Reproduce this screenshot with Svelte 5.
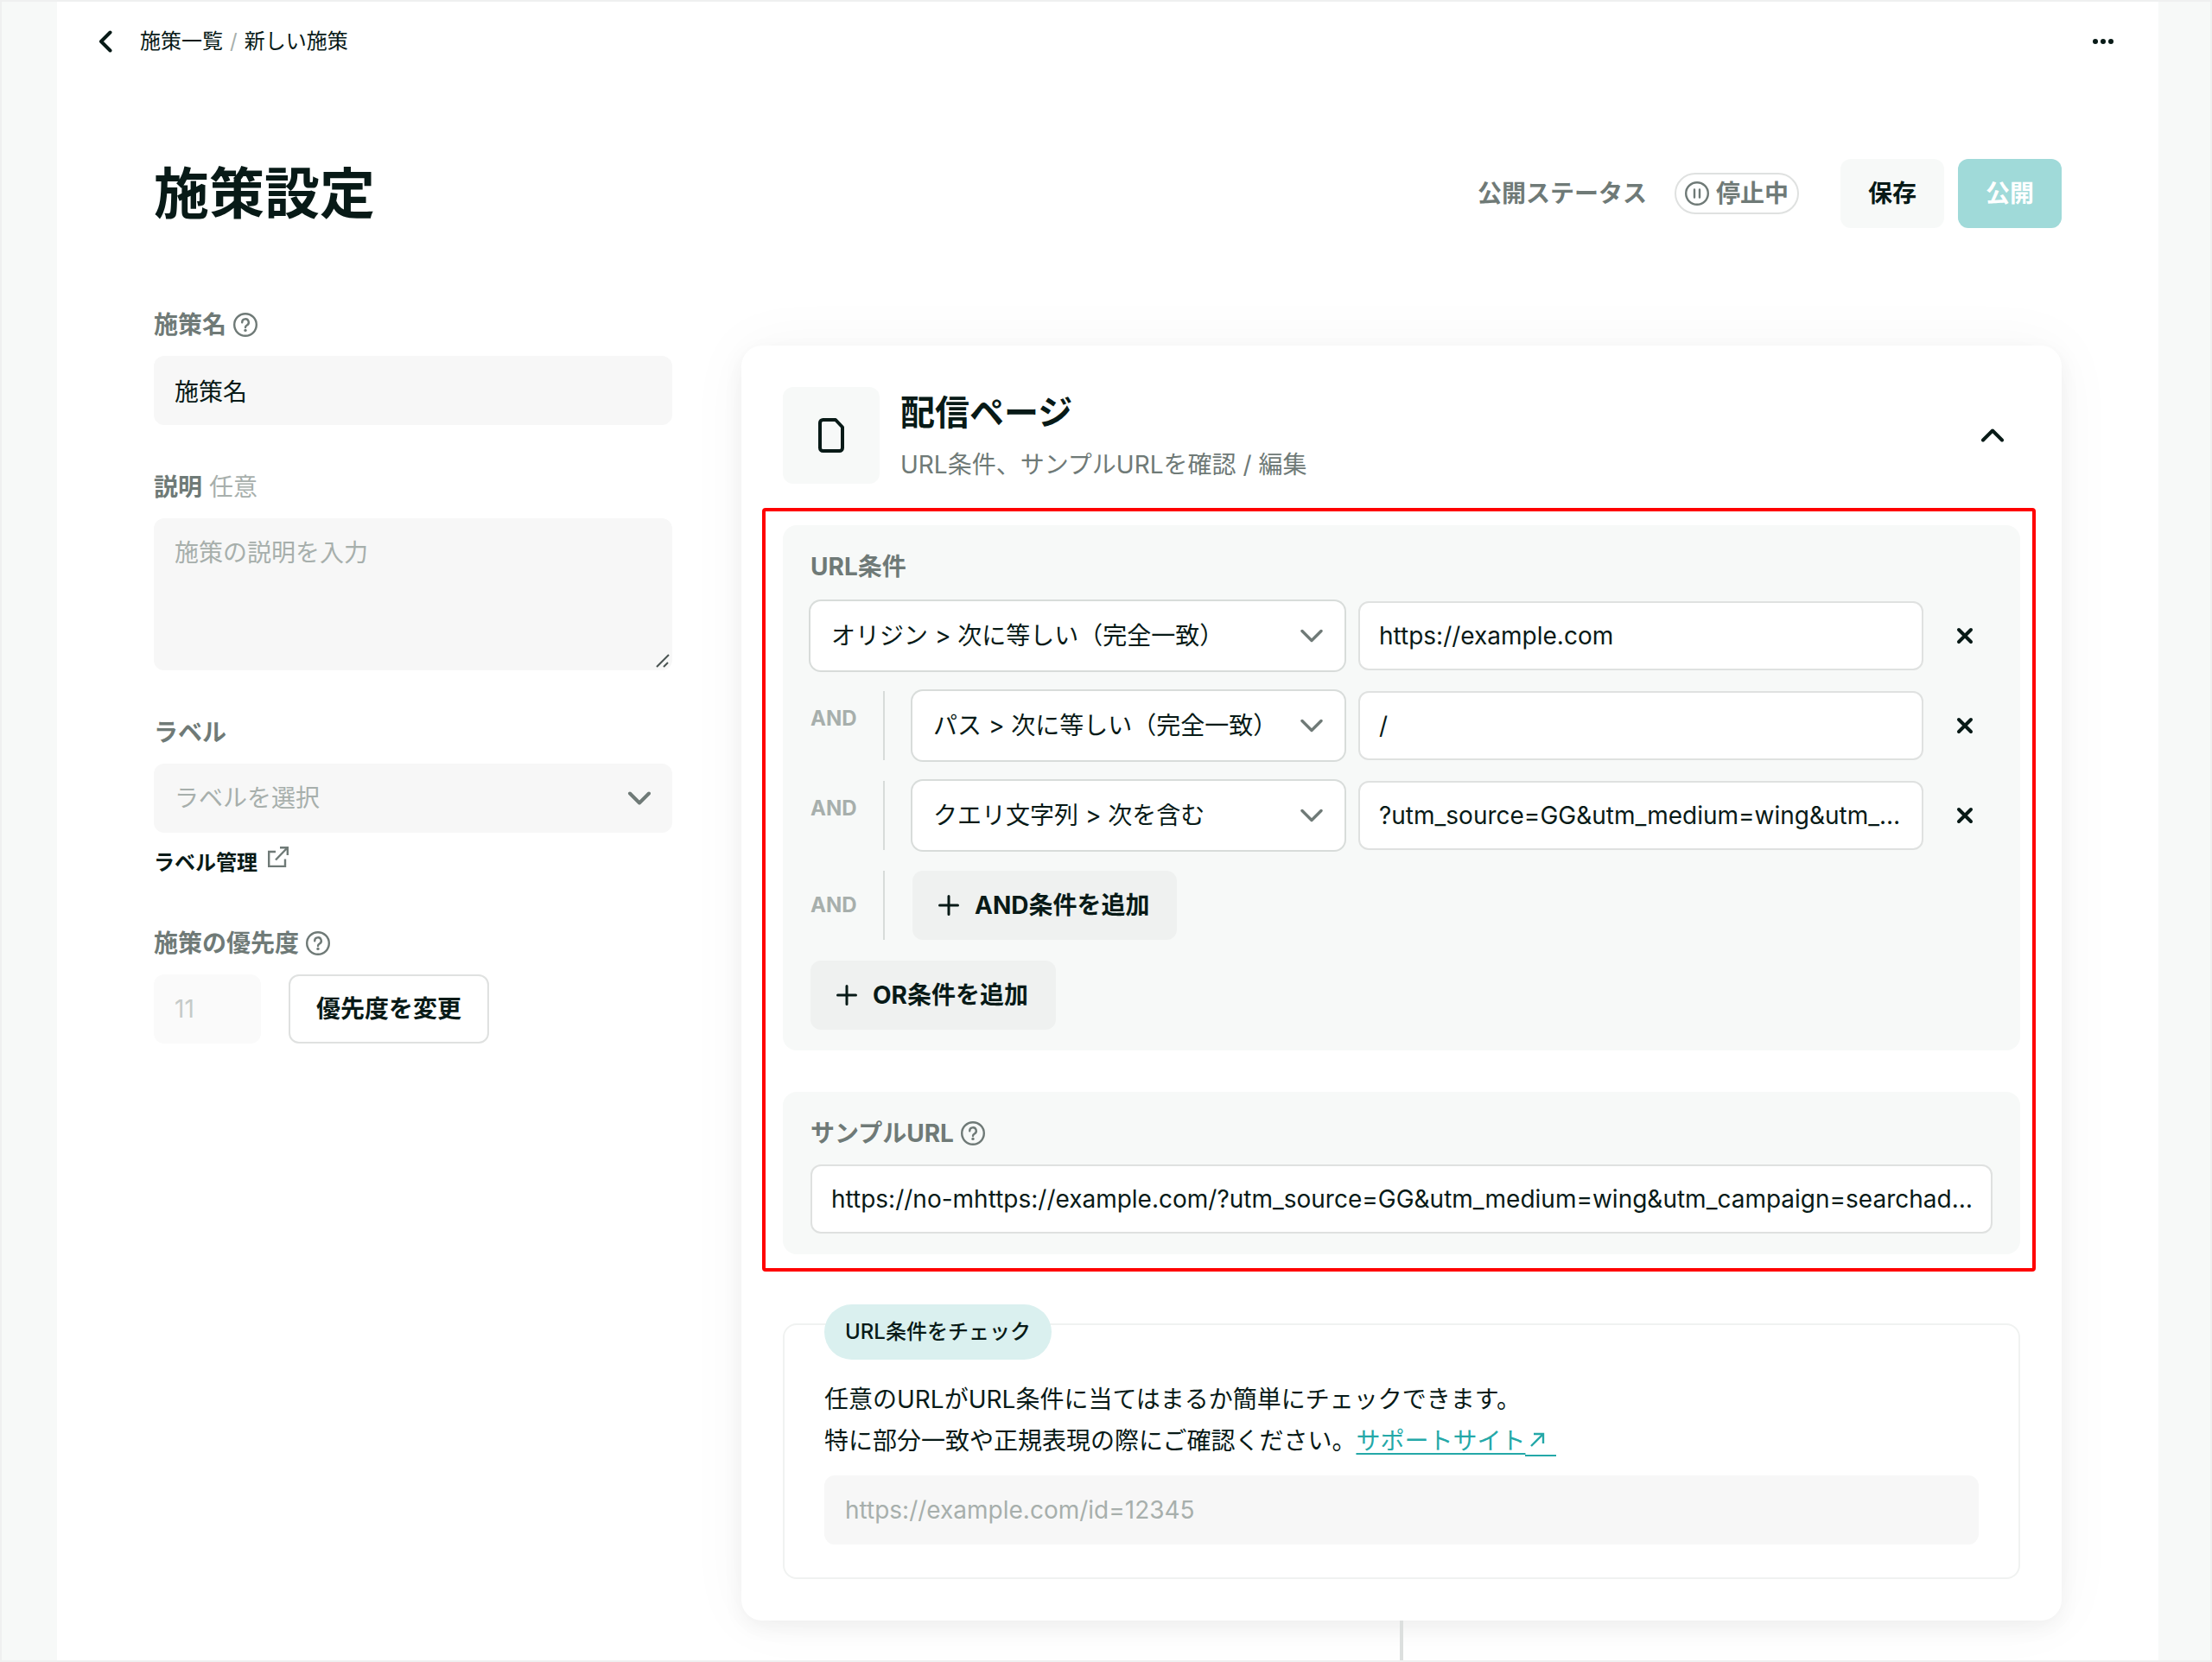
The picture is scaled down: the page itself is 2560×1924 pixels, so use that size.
<script>
    let name = '施策名';
    let description = '';
    let priority = '11';
    let sampleUrl = 'https://no-mhttps://example.com/?utm_source=GG&utm_medium=wing&utm_campaign=searchad…';
    let checkUrl = '';

    let conditions = [
        { type: 'オリジン > 次に等しい（完全一致）', value: 'https://example.com' },
        { type: 'パス > 次に等しい（完全一致）', value: '/' },
        { type: 'クエリ文字列 > 次を含む', value: '?utm_source=GG&utm_medium=wing&utm_…' },
    ];

    function removeCondition(index) {
        conditions = conditions.filter((_, i) => i !== index);
    }
</script>

{#snippet help()}
    <svg class="help" viewBox="0 0 28 28" aria-hidden="true">
        <circle cx="14" cy="14" r="12.8" />
        <path d="M10.2 11.2a3.8 3.8 0 1 1 5.6 3.3c-1.2.7-1.8 1.2-1.8 2.5" />
        <circle class="dot" cx="14" cy="20.4" r="1.7" />
    </svg>
{/snippet}

{#snippet chevron()}
    <svg class="chevron" viewBox="0 0 28 16" aria-hidden="true"><path d="M3 2.5l11 11 11-11" /></svg>
{/snippet}

{#snippet plus()}
    <svg class="plus" viewBox="0 0 24 24" aria-hidden="true"><path d="M12 1.5v21M1.5 12h21" /></svg>
{/snippet}

<div class="page">
    <main>
        <nav class="topbar">
            <button class="back" aria-label="戻る">
                <svg viewBox="0 0 16 26" aria-hidden="true"><path d="M13.5 2.5L3 13l10.5 10.5" /></svg>
            </button>
            <div class="breadcrumb">
                <a href="#list">施策一覧</a>
                <span class="slash">/</span>
                <span>新しい施策</span>
            </div>
            <button class="more" aria-label="メニュー">
                <svg viewBox="0 0 24 6" aria-hidden="true">
                    <circle cx="3" cy="3" r="3" /><circle cx="12" cy="3" r="3" /><circle cx="21" cy="3" r="3" />
                </svg>
            </button>
        </nav>

        <header>
            <h1>施策設定</h1>
            <span class="statusLabel">公開ステータス</span>
            <span class="status">
                <svg viewBox="0 0 28 28" aria-hidden="true">
                    <circle cx="14" cy="14" r="12.8" />
                    <path d="M11 9.5v9M17 9.5v9" />
                </svg>
                停止中
            </span>
            <div class="actions">
                <button class="save">保存</button>
                <button class="publish">公開</button>
            </div>
        </header>

        <div class="columns">
            <aside>
                <div class="field">
                    <div class="label"><label for="name">施策名</label>{@render help()}</div>
                    <input id="name" type="text" bind:value={name} />
                </div>

                <div class="field">
                    <div class="label"><label for="description">説明</label><span class="optional">任意</span></div>
                    <div class="textareaWrap">
                        <textarea id="description" placeholder="施策の説明を入力" bind:value={description}></textarea>
                        <svg class="grip" viewBox="0 0 16 16" aria-hidden="true"><path d="M1 15L15 1M9 15l5-5" /></svg>
                    </div>
                </div>

                <div class="field">
                    <div class="label"><label for="tag">ラベル</label></div>
                    <div class="select gray">
                        <select id="tag"><option>ラベルを選択</option></select>
                        {@render chevron()}
                    </div>
                    <a class="manage" href="#labels">
                        ラベル管理
                        <svg viewBox="0 0 24 24" aria-hidden="true">
                            <path d="M9 6H1.2v17H20v-8.5M9 15.5L22.5 1.5M14 1.2h8.8V10" />
                        </svg>
                    </a>
                </div>

                <div class="field">
                    <div class="label"><label for="priority">施策の優先度</label>{@render help()}</div>
                    <div class="priority">
                        <input id="priority" type="text" value={priority} disabled />
                        <button class="outlined">優先度を変更</button>
                    </div>
                </div>
            </aside>

            <div class="flow">
                <section class="card">
                    <div class="cardHead">
                        <div class="cardIcon">
                            <svg viewBox="0 0 30 40" aria-hidden="true">
                                <path d="M5.5 2H20l8 8.5v24a3.5 3.5 0 0 1-3.5 3.5h-19A3.5 3.5 0 0 1 2 34.5v-29A3.5 3.5 0 0 1 5.5 2z" />
                            </svg>
                        </div>
                        <div class="cardTitle">
                            <h2>配信ページ</h2>
                            <p>URL条件、サンプルURLを確認 / 編集</p>
                        </div>
                        <button class="collapse" aria-label="閉じる">
                            <svg viewBox="0 0 28 16" aria-hidden="true"><path d="M3 13.5l11-11 11 11" /></svg>
                        </button>
                    </div>

                    <div class="highlight">
                        <div class="panel">
                            <div class="label">URL条件</div>
                            <div class="conditions">
                                {#each conditions as condition, i}
                                    <div class="condition">
                                        <div class="conditionType">
                                            {#if i > 0}<span class="and">AND</span>{/if}
                                            <div class="select">
                                                <select aria-label="条件の種類"><option>{condition.type}</option></select>
                                                {@render chevron()}
                                            </div>
                                        </div>
                                        <input class="white" type="text" aria-label="条件の値" bind:value={condition.value} />
                                        <button class="remove" aria-label="削除" on:click={() => removeCondition(i)}>
                                            <svg viewBox="0 0 20 20" aria-hidden="true"><path d="M3 3l14 14M17 3L3 17" /></svg>
                                        </button>
                                    </div>
                                {/each}
                                <div class="conditionType">
                                    <span class="and last">AND</span>
                                    <button class="add">{@render plus()}AND条件を追加</button>
                                </div>
                                <button class="add">{@render plus()}OR条件を追加</button>
                            </div>
                        </div>

                        <div class="panel">
                            <div class="label"><label for="sample">サンプルURL</label>{@render help()}</div>
                            <input id="sample" class="white" type="text" bind:value={sampleUrl} />
                        </div>
                    </div>

                    <div class="check">
                        <label class="badge" for="check">URL条件をチェック</label>
                        <p>
                            任意のURLがURL条件に当てはまるか簡単にチェックできます。<br />
                            特に部分一致や正規表現の際にご確認ください。<a href="#support">サポートサイト<svg viewBox="0 0 36 28" aria-hidden="true"><path d="M7 18L21 4M10 4h11v11" /></svg></a>
                        </p>
                        <input id="check" type="text" placeholder="https://example.com/id=12345" bind:value={checkUrl} />
                    </div>
                </section>
                <div class="connector"></div>
            </div>
        </div>
    </main>
</div>

<style>
    :global(body) {
        margin: 0;
    }

    .page {
        box-sizing: border-box;
        min-height: 100vh;
        display: flex;
        padding: 0 60px 0 64px;
        border: 2px solid #eff0f0;
        background-color: #f7f9f8;
        color: #081a17;
        font-family: Inter, 'Noto Sans CJK JP', sans-serif;
        font-size: 28px;
        line-height: 40px;
    }

    main {
        flex: 1;
        min-width: 0;
        display: flex;
        flex-direction: column;
        background-color: white;
    }

    button, input, select, textarea {
        box-sizing: border-box;
        margin: 0;
        border: none;
        font: inherit;
        color: inherit;
    }

    button {
        padding: 0;
        background: none;
        cursor: pointer;
    }

    svg {
        fill: none;
        stroke: currentColor;
        flex-shrink: 0;
    }

    h1, h2, p {
        margin: 0;
    }

    a {
        color: inherit;
        text-decoration: none;
    }

    /* top bar */
    .topbar {
        display: flex;
        align-items: center;
        height: 92px;
        padding: 0 52px 0 48px;
        font-size: 24px;
    }

    .back, .more, .collapse, .remove {
        display: flex;
        align-items: center;
        justify-content: center;
    }

    .back {
        width: 16px;
        margin-right: 32px;
    }

    .back svg {
        width: 16px;
        height: 26px;
        stroke-width: 4;
        stroke-linecap: round;
        stroke-linejoin: round;
    }

    .breadcrumb {
        display: flex;
        gap: 8px;
        flex: 1;
    }

    .slash {
        color: #a7afac;
    }

    .more svg {
        width: 24px;
        height: 6px;
        fill: currentColor;
        stroke: none;
    }

    /* heading */
    header {
        display: flex;
        align-items: center;
        padding: 90px 112px 0;
        color: #6f7a77;
        font-weight: 700;
    }

    h1 {
        flex: 1;
        color: #081a17;
        font-size: 64px;
        line-height: 80px;
    }

    .status {
        box-sizing: border-box;
        display: flex;
        align-items: center;
        gap: 8px;
        height: 48px;
        margin: 0 48px 0 32px;
        padding: 0 10px;
        border: 2px solid #dfe1e0;
        border-radius: 24px;
    }

    .status svg {
        width: 28px;
        height: 28px;
        stroke-width: 2.4;
        stroke-linecap: round;
    }

    .actions {
        display: flex;
        gap: 16px;
    }

    .actions button {
        width: 120px;
        height: 80px;
        border-radius: 12px;
    }

    .save {
        background-color: #f7f9f8;
        color: #081a17;
    }

    .publish {
        background-color: #a0dad9;
        color: white;
    }

    .columns {
        flex: 1;
        display: flex;
        gap: 80px;
        padding: 92px 112px 0;
    }

    /* form fields */
    aside {
        width: 600px;
        display: flex;
        flex-direction: column;
        gap: 52px;
    }

    .label {
        display: flex;
        align-items: center;
        gap: 8px;
        margin-bottom: 16px;
        color: #6f7a77;
        font-weight: 700;
    }

    .optional {
        color: #a7afac;
        font-weight: 400;
    }

    .help {
        width: 28px;
        height: 28px;
        stroke-width: 2.4;
        stroke-linecap: round;
    }

    .help .dot {
        fill: currentColor;
        stroke: none;
    }

    input {
        display: block;
        width: 100%;
        height: 80px;
        padding: 0 24px;
        border-radius: 12px;
        background-color: #f7f7f7;
        text-overflow: ellipsis;
    }

    input.white {
        padding: 0 14px 0 22px;
        border: 2px solid #dfe1e0;
        background-color: white;
    }

    .textareaWrap {
        position: relative;
    }

    textarea {
        display: block;
        width: 100%;
        height: 176px;
        padding: 20px 24px;
        border-radius: 12px;
        background-color: #f7f7f7;
        resize: none;
    }

    input::placeholder, textarea::placeholder {
        color: #a7afac;
        opacity: 1;
    }

    .grip {
        position: absolute;
        right: 3px;
        bottom: 3px;
        width: 16px;
        height: 16px;
        stroke: #4a5452;
        stroke-width: 2;
    }

    .select {
        flex: 1;
        min-width: 0;
        display: grid;
        align-items: center;
        height: 80px;
        border-radius: 12px;
        background-color: white;
        box-shadow: 0 0 0 2px #d8dcda;
    }

    .select.gray {
        background-color: #f7f7f7;
        box-shadow: none;
        color: #a7afac;
    }

    .select select, .select .chevron {
        grid-area: 1 / 1;
    }

    select {
        appearance: none;
        width: 100%;
        height: 80px;
        padding: 0 64px 0 24px;
        background: none;
    }

    .chevron {
        justify-self: end;
        width: 28px;
        height: 16px;
        margin-right: 24px;
        stroke: #6f7a77;
        stroke-width: 3.4;
        stroke-linecap: round;
        stroke-linejoin: round;
        pointer-events: none;
    }

    .gray .chevron {
        stroke-width: 4;
    }

    .manage {
        display: flex;
        align-items: flex-start;
        gap: 12px;
        height: 40px;
        margin-top: 16px;
        font-size: 24px;
        line-height: 38px;
        font-weight: 700;
    }

    .manage svg {
        width: 24px;
        height: 24px;
        stroke: #6f7a77;
        stroke-width: 2.4;
    }

    .priority {
        display: flex;
        gap: 32px;
    }

    .priority input {
        width: 124px;
        background-color: #fafafa;
        color: #c5cac8;
    }

    .outlined {
        height: 80px;
        padding: 0 30px;
        border: 2px solid #dfe1e0;
        border-radius: 12px;
        font-weight: 700;
    }

    /* card */
    .flow {
        flex: 1;
        min-width: 0;
        display: flex;
        flex-direction: column;
        padding-top: 44px;
    }

    .card {
        padding: 48px;
        border-radius: 24px;
        background-color: white;
        box-shadow: 0 8px 24px rgba(8, 26, 23, 0.05), 0 0 72px rgba(8, 26, 23, 0.04);
    }

    .cardHead {
        display: flex;
        align-items: center;
        gap: 24px;
        margin-bottom: 28px;
    }

    .cardIcon {
        display: flex;
        align-items: center;
        justify-content: center;
        width: 112px;
        height: 112px;
        border-radius: 12px;
        background-color: #f7f9f8;
    }

    .cardIcon svg {
        width: 30px;
        height: 40px;
        stroke-width: 4;
        stroke-linejoin: round;
    }

    .cardTitle {
        flex: 1;
    }

    h2 {
        margin-bottom: 12px;
        font-size: 40px;
        line-height: 56px;
    }

    .cardTitle p {
        color: #6f7a77;
    }

    .collapse {
        width: 64px;
        height: 64px;
    }

    .collapse svg {
        width: 28px;
        height: 16px;
        stroke-width: 4;
        stroke-linecap: round;
        stroke-linejoin: round;
    }

    .highlight {
        display: flex;
        flex-direction: column;
        gap: 48px;
        margin: 0 -18px 60px -24px;
        padding: 16px 14px 16px 20px;
        border: 4px solid #ff0000;
        border-radius: 4px;
    }

    .panel {
        padding: 28px 32px 24px;
        border-radius: 16px;
        background-color: #f7f9f8;
    }

    .conditions {
        display: flex;
        flex-direction: column;
        align-items: flex-start;
        gap: 24px;
        padding-top: 4px;
    }

    .condition {
        width: 100%;
        display: grid;
        grid-template-columns: 618px 1fr 64px;
        gap: 16px;
    }

    .conditionType {
        display: flex;
        align-items: center;
    }

    .and {
        box-sizing: border-box;
        width: 86px;
        height: 80px;
        margin-right: 32px;
        border-right: 2px solid #d8dcda;
        color: #a7afac;
        font-size: 24px;
        line-height: 64px;
        font-weight: 700;
    }

    .and.last {
        line-height: 80px;
    }

    .remove {
        width: 64px;
        height: 80px;
    }

    .remove svg {
        width: 20px;
        height: 20px;
        stroke-width: 4;
        stroke-linecap: round;
    }

    .add {
        display: flex;
        align-items: center;
        gap: 18px;
        height: 80px;
        padding: 0 32px 0 30px;
        border-radius: 12px;
        background-color: #eff1f0;
        font-weight: 700;
    }

    .plus {
        width: 24px;
        height: 24px;
        stroke-width: 3;
        stroke-linecap: round;
    }

    /* url check */
    .check {
        padding: 0 46px 38px;
        border: 2px solid #f0f2f1;
        border-radius: 16px;
    }

    .badge {
        display: block;
        width: fit-content;
        margin: -24px 0 22px;
        padding: 0 24px;
        border-radius: 32px;
        background-color: #daf0ef;
        font-size: 24px;
        line-height: 64px;
        font-weight: 500;
    }

    .check p {
        margin-bottom: 16px;
        line-height: 48px;
    }

    .check a {
        color: #24a8a8;
        text-decoration: underline;
        text-decoration-thickness: 2px;
        text-decoration-skip-ink: none;
        text-underline-offset: 4px;
    }

    .check a svg {
        width: 36px;
        height: 28px;
        border-bottom: 2px solid #24a8a8;
        stroke-width: 2.4;
        vertical-align: -8px;
    }

    .connector {
        flex: 1;
        align-self: center;
        width: 4px;
        min-height: 46px;
        background-color: #dcdfde;
    }
</style>
